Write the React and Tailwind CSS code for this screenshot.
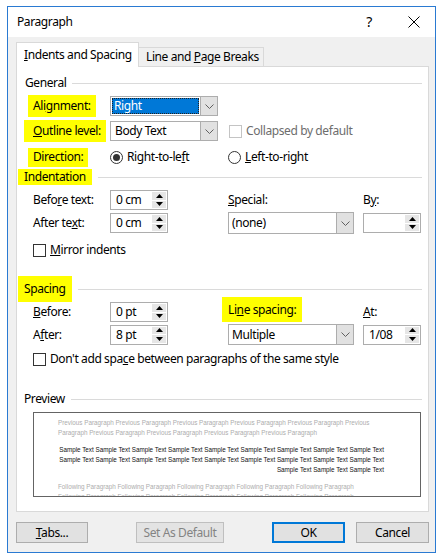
import React from 'react';

// Word "Paragraph" dialog (Windows 10 look)

function Hl({ children, className = '' }) {
    return <span className={`bg-[#ffff00] flex items-center ${className}`}>{children}</span>;
}

function Chevron() {
    return (
        <svg width="9" height="5" viewBox="0 0 9 5">
            <polyline points="0.5,0.5 4.5,4.5 8.5,0.5" fill="none" stroke="#606060" strokeWidth="1" />
        </svg>
    );
}

function Combo({ width, value, selected }) {
    return (
        <div className={`flex h-[20px] border border-[#adadad] bg-white ${width}`}>
            <div className="flex-1 flex items-center p-[1px]">
                {selected ? (
                    <div className="h-full w-full bg-[#0078d7] text-white flex items-center pl-[2px] outline outline-1 outline-dotted outline-[#222] -outline-offset-1">
                        {value}
                    </div>
                ) : (
                    <span className="pl-[3px]">{value}</span>
                )}
            </div>
            <div className="w-[17px] bg-[#e1e1e1] border-l border-[#adadad] flex items-center justify-center">
                <Chevron />
            </div>
        </div>
    );
}

function Spin({ value }) {
    return (
        <div className="flex h-[20px] w-[58px] border border-[#adadad] bg-white">
            <div className="flex-1 flex items-center pl-[5px]">{value}</div>
            <div className="w-[15px] flex flex-col gap-px p-[1px] pl-0">
                <div className="flex-1 bg-[#e6e6e6] flex items-center justify-center">
                    <svg width="7" height="4" viewBox="0 0 7 4"><polygon points="0,4 3.5,0 7,4" fill="#000" /></svg>
                </div>
                <div className="flex-1 bg-[#e6e6e6] flex items-center justify-center">
                    <svg width="7" height="4" viewBox="0 0 7 4"><polygon points="0,0 3.5,4 7,0" fill="#000" /></svg>
                </div>
            </div>
        </div>
    );
}

function Check({ disabled }) {
    return (
        <div className={`w-[13px] h-[13px] border bg-white ${disabled ? 'border-[#c4c4c4]' : 'border-[#333]'}`} />
    );
}

function Radio({ checked }) {
    return (
        <div className="w-[13px] h-[13px] rounded-full border border-[#333] bg-white flex items-center justify-center">
            {checked && <div className="w-[7px] h-[7px] rounded-full bg-[#333]" />}
        </div>
    );
}

function Section({ children, className = '' }) {
    return (
        <div className={`flex items-center mr-[6px] ${className}`}>
            {children}
            <div className="flex-1 h-px bg-[#dadada] ml-[6px]" />
        </div>
    );
}

const prev1 = 'Previous Paragraph Previous Paragraph Previous Paragraph Previous Paragraph Previous Paragraph Previous';
const prev2 = 'Paragraph Previous Paragraph Previous Paragraph Previous Paragraph Previous Paragraph';
const sample = 'Sample Text Sample Text Sample Text Sample Text Sample Text Sample Text Sample Text Sample Text Sample Text';
const sample3 = 'Sample Text Sample Text Sample Text';
const follow = 'Following Paragraph Following Paragraph Following Paragraph Following Paragraph Following Paragraph';

export default function App() {
    return (
        <div className="w-[444px] h-[559px] bg-white pt-[6px] pl-[7px] font-['Noto_Sans','Liberation_Sans',sans-serif] text-[12px] tracking-[-0.4px] text-black leading-none">
            <div className="w-[429px] h-[547px] border border-[#2a7ad2] bg-[#f0f0f0] flex flex-col">
                {/* Title bar */}
                <div className="h-[30px] bg-white flex items-center pl-[9px] shrink-0">
                    <span>Paragraph</span>
                    <span className="ml-auto mr-[36px] text-[14px]">?</span>
                    <svg width="12" height="12" viewBox="0 0 12 12" className="mr-[15px]">
                        <path d="M0.5 0.5 L11.5 11.5 M11.5 0.5 L0.5 11.5" stroke="#000" strokeWidth="1" />
                    </svg>
                </div>

                <div className="flex-1 pl-[8px] pr-[6px] flex flex-col">
                    {/* Tabs */}
                    <div className="h-[29px] flex items-end">
                        <div className="relative z-10 h-[25px] -mb-px w-[123px] bg-white border border-b-0 border-[#d9d9d9] flex items-center pl-[7px]">
                            <span><u>I</u>ndents and Spacing</span>
                        </div>
                        <div className="h-[19px] w-[125px] border border-l-0 border-b-0 border-[#d9d9d9] flex items-center pl-[7px]">
                            <span>Line and <u>P</u>age Breaks</span>
                        </div>
                    </div>

                    {/* Panel */}
                    <div className="h-[446px] border border-[#d9d9d9] bg-white flex flex-col">
                        <Section className="h-[16px] mt-[8px] ml-[8px]">
                            <span>General</span>
                        </Section>

                        <div className="flex items-center h-[22px] mt-[4px] ml-[11px]">
                            <div className="w-[82px] h-full flex">
                                <Hl className="h-full px-[5px]">Ali<u>g</u>nment:</Hl>
                            </div>
                            <Combo width="w-[108px]" value="Right" selected />
                        </div>

                        <div className="flex items-center h-[22px] mt-[3px] ml-[11px]">
                            <div className="w-[82px] h-full flex">
                                <Hl className="h-full w-[82px] -ml-[4px] pl-[9px]"><u>O</u>utline level:</Hl>
                            </div>
                            <Combo width="w-[108px]" value="Body Text" />
                            <div className="ml-[11px] flex items-center gap-[4px] text-[#6d6d6d]">
                                <Check disabled />
                                <span>Collapsed by default</span>
                            </div>
                        </div>

                        <div className="flex items-center h-[22px] mt-[4px] ml-[11px]">
                            <div className="w-[82px] h-[19px] flex">
                                <Hl className="h-full px-[5px]">Direction:</Hl>
                            </div>
                            <div className="w-[118px] flex items-center gap-[4px]">
                                <Radio checked />
                                <span>Right-to-le<u>f</u>t</span>
                            </div>
                            <div className="flex items-center gap-[4px]">
                                <Radio />
                                <span><u>L</u>eft-to-right</span>
                            </div>
                        </div>

                        <Section className="h-[16px] mt-[1px] ml-[1px]">
                            <Hl className="h-full px-[6px]">Indentation</Hl>
                        </Section>

                        <div className="flex items-center h-[20px] mt-[5px] ml-[11px]">
                            <div className="w-[200px] flex items-center">
                                <span className="w-[82px] pl-[5px]">Befo<u>r</u>e text:</span>
                                <Spin value="0 cm" />
                            </div>
                            <span className="w-[135px]"><u>S</u>pecial:</span>
                            <span>B<u>y</u>:</span>
                        </div>

                        <div className="flex items-center h-[22px] mt-[2px] ml-[11px]">
                            <div className="w-[200px] flex items-center">
                                <span className="w-[82px] pl-[5px]">After te<u>x</u>t:</span>
                                <Spin value="0 cm" />
                            </div>
                            <div className="w-[135px]">
                                <div className="flex h-[22px] w-[126px] border border-[#adadad] bg-white">
                                    <div className="flex-1 flex items-center pl-[3px]">(none)</div>
                                    <div className="w-[17px] bg-[#e1e1e1] border-l border-[#adadad] flex items-center justify-center"><Chevron /></div>
                                </div>
                            </div>
                            <Spin value="" />
                        </div>

                        <div className="flex items-center h-[16px] mt-[8px] ml-[16px] gap-[4px]">
                            <Check />
                            <span><u>M</u>irror indents</span>
                        </div>

                        <Section className="h-[26px] mt-[18px] ml-[1px]">
                            <Hl className="h-full px-[6px]">Spacing</Hl>
                        </Section>

                        <div className="flex items-center h-[20px] ml-[11px]">
                            <div className="w-[200px] flex items-center">
                                <span className="w-[82px] pl-[5px]"><u>B</u>efore:</span>
                                <Spin value="0 pt" />
                            </div>
                            <div className="w-[135px] h-full flex">
                                <Hl className="h-[25px] -mt-[5px] -ml-[6px] px-[6px]">Li<u>n</u>e spacing:</Hl>
                            </div>
                            <span><u>A</u>t:</span>
                        </div>

                        <div className="flex items-center h-[21px] mt-[2px] ml-[11px]">
                            <div className="w-[200px] flex items-center">
                                <span className="w-[82px] pl-[5px]">A<u>f</u>ter:</span>
                                <Spin value="8 pt" />
                            </div>
                            <div className="w-[135px]">
                                <div className="flex h-[21px] w-[126px] border border-[#adadad] bg-white">
                                    <div className="flex-1 flex items-center pl-[3px]">Multiple</div>
                                    <div className="w-[17px] bg-[#e1e1e1] border-l border-[#adadad] flex items-center justify-center"><Chevron /></div>
                                </div>
                            </div>
                            <Spin value="1/08" />
                        </div>

                        <div className="flex items-center h-[16px] mt-[6px] ml-[16px] gap-[4px]">
                            <Check />
                            <span>Don't add spa<u>c</u>e between paragraphs of the same style</span>
                        </div>

                        <Section className="h-[16px] mt-[24px] ml-[7px]">
                            <span>Preview</span>
                        </Section>

                        {/* Preview box */}
                        <div className="mt-[5px] ml-[16px] w-[388px] h-[85px] border border-[#646464] bg-white overflow-hidden pt-[5px] pl-[24px] pr-[36px] font-['Liberation_Sans',sans-serif] text-[6.3px] leading-[10px] tracking-normal whitespace-nowrap">
                            <div className="text-[#adadad]">
                                <div>{prev1}</div>
                                <div>{prev2}</div>
                            </div>
                            <div className="mt-[7px] text-right text-[#111]">
                                <div>{sample}</div>
                                <div>{sample}</div>
                                <div>{sample3}</div>
                            </div>
                            <div className="mt-[7px] text-[#adadad]">
                                <div>{follow}</div>
                                <div>{follow}</div>
                            </div>
                        </div>
                    </div>

                    {/* Buttons */}
                    <div className="flex mt-[10px] h-[21px]">
                        <div className="w-[72px] h-full border border-[#adadad] bg-[#e1e1e1] flex items-center justify-center">
                            <span><u>T</u>abs...</span>
                        </div>
                        <div className="ml-[48px] w-[88px] h-full border border-[#bfbfbf] bg-[#e3e3e3] text-[#838383] flex items-center justify-center">
                            Set As Default
                        </div>
                        <div className="ml-[48px] w-[73px] h-full border-2 border-[#0078d7] bg-[#e1e1e1] flex items-center justify-center">
                            OK
                        </div>
                        <div className="ml-[11px] w-[73px] h-full border border-[#adadad] bg-[#e1e1e1] flex items-center justify-center">
                            Cancel
                        </div>
                    </div>
                </div>
            </div>
        </div>
    );
}
